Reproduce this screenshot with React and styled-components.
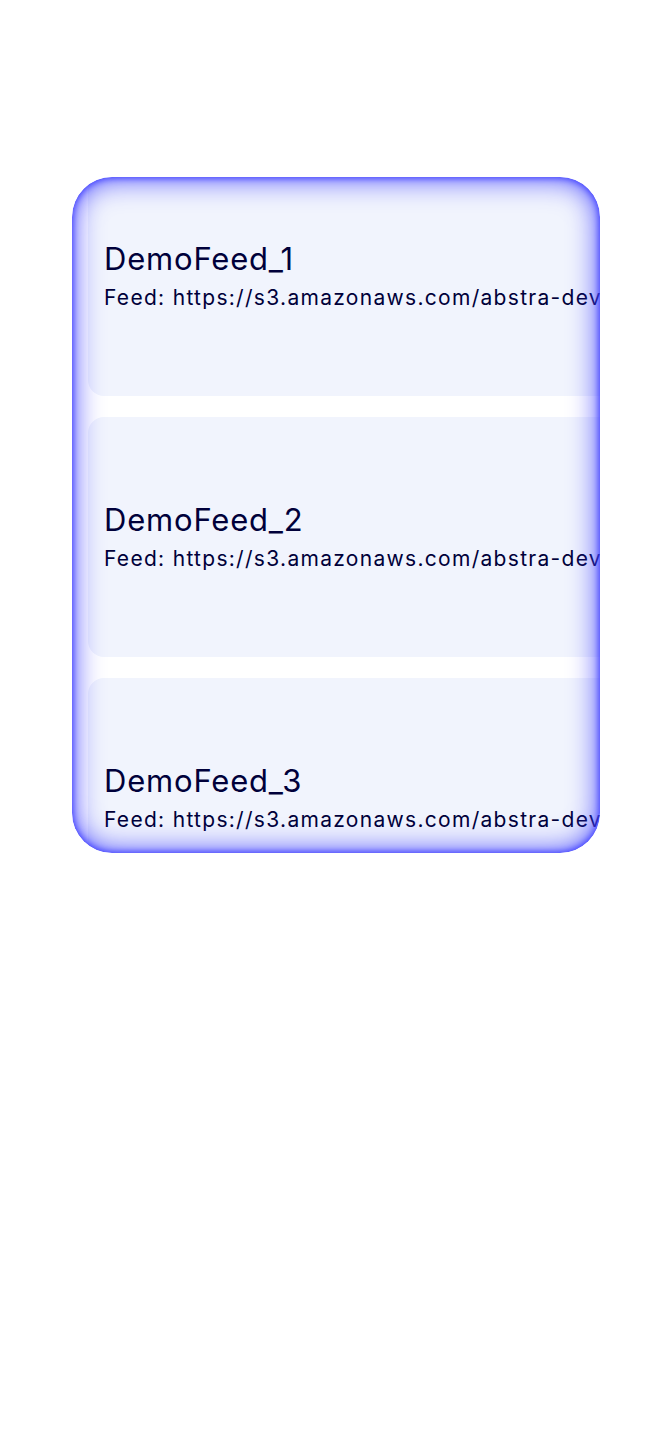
import React from 'react';
import styled, { createGlobalStyle } from 'styled-components';

const GlobalStyle = createGlobalStyle`
  body {
    margin: 0;
    background: #fff;
    font-family: Inter, "Noto Sans", sans-serif;
  }
`;

const Page = styled.div`
  display: flex;
  justify-content: center;
  padding-top: 177px;
  min-height: 1450px;
  box-sizing: border-box;
`;

const Frame = styled.div`
  position: relative;
  width: 528px;
  height: 676px;
  border-radius: 40px;
  overflow: hidden;
  background: #fff;

  &::after {
    content: '';
    position: absolute;
    inset: 0;
    border-radius: inherit;
    box-shadow: inset 0 0 30px 0 #3a3aff, inset 0 0 6px 1px #4a4aff;
    pointer-events: none;
  }
`;

const List = styled.div`
  display: flex;
  flex-direction: column;
  gap: 21px;
  padding-left: 16px;
  margin-top: -21px;
  width: max-content;
`;

const Card = styled.div`
  height: 240px;
  min-width: 560px;
  padding: 0 16px;
  display: flex;
  flex-direction: column;
  justify-content: center;
  background: #f1f4fd;
  border-radius: 16px;
  white-space: nowrap;
`;

const Title = styled.div`
  font-size: 31px;
  line-height: 36px;
  letter-spacing: 0.8px;
  color: #00003a;
  margin-bottom: 8px;
`;

const FeedLine = styled.div`
  font-size: 21px;
  line-height: 26px;
  letter-spacing: 1.3px;
  color: #00003a;
`;

const feeds = [1, 2, 3].map((n) => ({
  name: `DemoFeed_${n}`,
  url: 'https://s3.amazonaws.com/abstra-dev/feeds/demo.xml',
}));

export default function App() {
  return (
    <>
      <GlobalStyle />
      <Page>
        <Frame>
          <List>
            {feeds.map((f) => (
              <Card key={f.name}>
                <Title>{f.name}</Title>
                <FeedLine>Feed: {f.url}</FeedLine>
              </Card>
            ))}
          </List>
        </Frame>
      </Page>
    </>
  );
}
